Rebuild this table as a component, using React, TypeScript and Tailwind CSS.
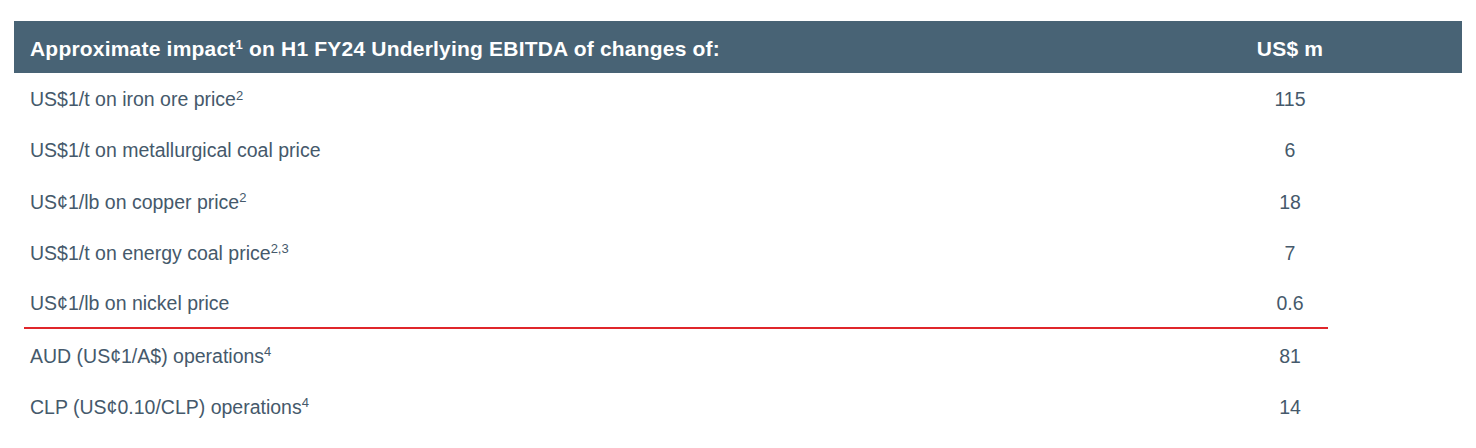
const rows: { label: string; sup?: string; value: string; rule?: boolean }[] = [
  { label: 'US$1/t on iron ore price', sup: '2', value: '115' },
  { label: 'US$1/t on metallurgical coal price', value: '6' },
  { label: 'US¢1/lb on copper price', sup: '2', value: '18' },
  { label: 'US$1/t on energy coal price', sup: '2,3', value: '7' },
  { label: 'US¢1/lb on nickel price', value: '0.6', rule: true },
  { label: 'AUD (US¢1/A$) operations', sup: '4', value: '81' },
  { label: 'CLP (US¢0.10/CLP) operations', sup: '4', value: '14' },
];

export default function App() {
  return (
    <div className="bg-white w-[1476px] h-[448px] pt-[21px] pl-[14px] font-['Liberation_Sans',Arial,sans-serif]">
      <div className="w-[1448px]">
        {/* header */}
        <div className="flex items-center h-[52px] pt-[3px] bg-[#486375] text-white font-bold text-[21px] tracking-[0.2px]">
          <div className="flex-1 pl-4">
            Approximate impact<sup className="text-[13px]">1</sup> on H1 FY24 Underlying EBITDA of changes of:
          </div>
          <div className="w-[76px] text-center">US$ m</div>
          <div className="w-[134px]" />
        </div>

        {rows.map((r) => (
          <div key={r.label} className="flex">
            <div
              className={`flex flex-1 items-center h-[51.3px] pt-[2px] ml-[10px] text-[19.5px] text-[#45596b] ${
                r.rule ? 'border-b-2 border-[#e0262b]' : ''
              }`}
            >
              <div className="flex-1 pl-[6px]">
                {r.label}
                {r.sup && <sup className="text-[13px]">{r.sup}</sup>}
              </div>
              <div className="w-[76px] text-center">{r.value}</div>
            </div>
            <div className="w-[134px]" />
          </div>
        ))}
      </div>
    </div>
  );
}
